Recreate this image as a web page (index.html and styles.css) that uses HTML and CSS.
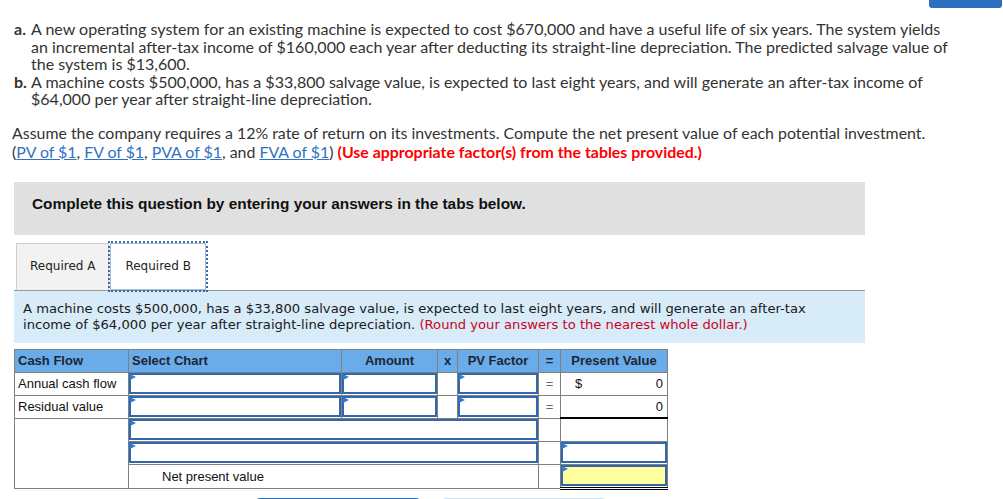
FILE: index.html
```html
<!DOCTYPE html>
<html lang="en">
<head>
<meta charset="utf-8">
<title>NPV question</title>
<link rel="stylesheet" href="styles.css">
</head>
<body>
<div class="topbar"><span class="topbtn"></span></div>
<main class="page">
  <ol class="parts">
    <li><b class="mk">a.</b><span>A new operating system for an existing machine is expected to cost $670,000 and have a useful life of six years. The system yields an incremental after-tax income of $160,000 each year after deducting its straight-line depreciation. The predicted salvage value of the system is $13,600.</span></li>
    <li><b class="mk">b.</b><span>A machine costs $500,000, has a $33,800 salvage value, is expected to last eight years, and will generate an after-tax income of $64,000 per year after straight-line depreciation.</span></li>
  </ol>
  <p class="assume">Assume the company requires a 12% rate of return on its investments. Compute the net present value of each potential investment. (<a href="#">PV of $1</a>, <a href="#">FV of $1</a>, <a href="#">PVA of $1</a>, and <a href="#">FVA of $1</a>) <strong class="red">(Use appropriate factor(s) from the tables provided.)</strong></p>

  <section class="work">
    <div class="instr">Complete this question by entering your answers in the tabs below.</div>
    <div class="tabs">
      <span class="tab">Required A</span>
      <span class="tab active">Required B</span>
    </div>
    <div class="prompt">A machine costs $500,000, has a $33,800 salvage value, is expected to last eight years, and will generate an after-tax income of $64,000 per year after straight-line depreciation. <span class="note">(Round your answers to the nearest whole dollar.)</span></div>

    <table class="npv">
      <colgroup>
        <col class="c1"><col class="c2"><col class="c3"><col class="c4"><col class="c5"><col class="c6"><col class="c7">
      </colgroup>
      <thead>
        <tr>
          <th class="left">Cash Flow</th>
          <th class="left">Select Chart</th>
          <th>Amount</th>
          <th>x</th>
          <th>PV Factor</th>
          <th>=</th>
          <th>Present Value</th>
        </tr>
      </thead>
      <tbody>
        <tr>
          <td class="lbl">Annual cash flow</td>
          <td class="in"><div class="field"><input type="text"></div></td>
          <td class="in"><div class="field"><input type="text"></div></td>
          <td></td>
          <td class="in"><div class="field"><input type="text"></div></td>
          <td class="eq">=</td>
          <td class="pv"><span>$</span><span>0</span></td>
        </tr>
        <tr>
          <td class="lbl">Residual value</td>
          <td class="in"><div class="field"><input type="text"></div></td>
          <td class="in"><div class="field"><input type="text"></div></td>
          <td></td>
          <td class="in"><div class="field"><input type="text"></div></td>
          <td class="eq">=</td>
          <td class="pv sub"><span></span><span>0</span></td>
        </tr>
        <tr>
          <td rowspan="3"></td>
          <td class="in" colspan="4"><div class="field"><input type="text"></div></td>
          <td></td>
          <td></td>
        </tr>
        <tr>
          <td class="in" colspan="4"><div class="field"><input type="text"></div></td>
          <td></td>
          <td class="in"><div class="field"><input type="text"></div></td>
        </tr>
        <tr class="last">
          <td class="npvlbl" colspan="4">Net present value</td>
          <td></td>
          <td class="in total"><div class="field"><input type="text" class="yellow"></div></td>
        </tr>
      </tbody>
    </table>

    <div class="nav">
      <span class="btn prev"></span>
      <span class="btn next"></span>
    </div>
  </section>
</main>
</body>
</html>
```

FILE: styles.css
```css
* { box-sizing: border-box; }
html, body { margin: 0; padding: 0; background: #fff; }
body {
  font-family: Lato, "Open Sans", sans-serif;
  color: #333;
  overflow: hidden;
}

.topbar {
  display: flex;
  justify-content: flex-end;
  height: 8px;
  padding-right: 1px;
}
.topbtn {
  width: 73px;
  height: 8px;
  background: #2b70c0;
  border-radius: 0 0 3px 3px;
}

.page {
  width: 949px;
  padding-left: 12px;
}

.parts {
  list-style: none;
  margin: 12px 0 0 0;
  padding: 0 0 0 2px;
  font-size: 16.05px;
  line-height: 17.5px;
}
.parts li {
  display: grid;
  grid-template-columns: 17px 1fr;
}
.mk { font-weight: 700; color: #333; }

.assume {
  margin: 15.5px 0 0 0;
  font-size: 15.9px;
  line-height: 19px;
}
.assume a { color: #2f71c2; text-decoration: underline; }
.red { color: #f00; font-weight: 700; }

.work {
  margin: 20.5px 0 0 2px;
  width: 851px;
}
.instr {
  background: #e0e0e0;
  height: 53px;
  padding: 13px 0 0 18px;
  font-family: "Liberation Sans", Arial, sans-serif;
  font-weight: 700;
  font-size: 15.4px;
  color: #111;
}

.tabs {
  display: flex;
  margin-top: 8px;
  padding-left: 2px;
  border-bottom: 1px solid #999;
  height: 48px;
}
.tab {
  display: flex;
  align-items: center;
  height: 47px;
  padding: 0 13px 1px 13px;
  background: #f2f2f2;
  border: 1px solid #cfcfcf;
  border-bottom: none;
  font-family: "DejaVu Sans", Verdana, sans-serif;
  font-size: 12px;
  color: #222;
}
.tab.active {
  background: #fff;
  border: 1px solid #bbb;
  outline: 2px dotted #2a6fc0;
  outline-offset: 0;
  margin-left: 1px;
  padding: 0 14px 1px 14px;
}

.prompt {
  background: #d7ebf9;
  height: 52px;
  padding: 10px 45px 0 9px;
  font-family: "DejaVu Sans", Verdana, sans-serif;
  font-size: 13.15px;
  line-height: 16px;
  color: #1a1a1a;
}
.note { color: #d0021b; }

.npv {
  margin-top: 6px;
  border-collapse: collapse;
  table-layout: fixed;
  width: 653px;
  font-family: "Liberation Sans", Arial, sans-serif;
  font-size: 13px;
  color: #111;
}
.c1 { width: 114px; }
.c2 { width: 213px; }
.c3 { width: 96px; }
.c4 { width: 20px; }
.c5 { width: 81px; }
.c6 { width: 22px; }
.c7 { width: 107px; }

.npv th, .npv td {
  border: 1px solid #808080;
  height: 23px;
  padding: 0;
}
.npv th {
  background: #6aabe9;
  font-weight: 700;
  color: #1c2633;
  text-align: center;
}
.npv th.left { text-align: left; padding-left: 3px; }
.npv td.lbl { padding-left: 3px; }
.npv td.eq { text-align: center; color: #666; }
.npv td.pv { padding: 0 4px 0 14px; }
.npv td.pv span:last-child { float: right; }
.npv td.sub { border-bottom: 2px solid #000; }
.npv td.npvlbl { padding-left: 33px; }
.npv tr.last td { height: 24px; }
.npv td.total { border-bottom: 3px double #000; }

.field {
  position: relative;
  height: 21px;
}
.field::before {
  content: "";
  position: absolute;
  left: 1px;
  top: 1px;
  border-left: 6px solid #2e7dd7;
  border-top: 3px solid transparent;
  border-bottom: 3px solid transparent;
}
.field input {
  display: block;
  width: 100%;
  height: 21px;
  margin: 0;
  border: 2px solid #3168ad;
  border-radius: 0;
  background: #fff;
  padding: 0 4px;
  font: inherit;
}
.field input.yellow { background: #ffff9e; }

.nav {
  display: flex;
  gap: 22px;
  margin-top: 8px;
  padding-left: 242px;
}
.btn {
  width: 164px;
  height: 32px;
  border-radius: 4px;
}
.btn.prev { border: 2px solid #2a72c0; background: #fff; }
.btn.next { border: 2px solid #cfe2f4; background: #fff; }
```
